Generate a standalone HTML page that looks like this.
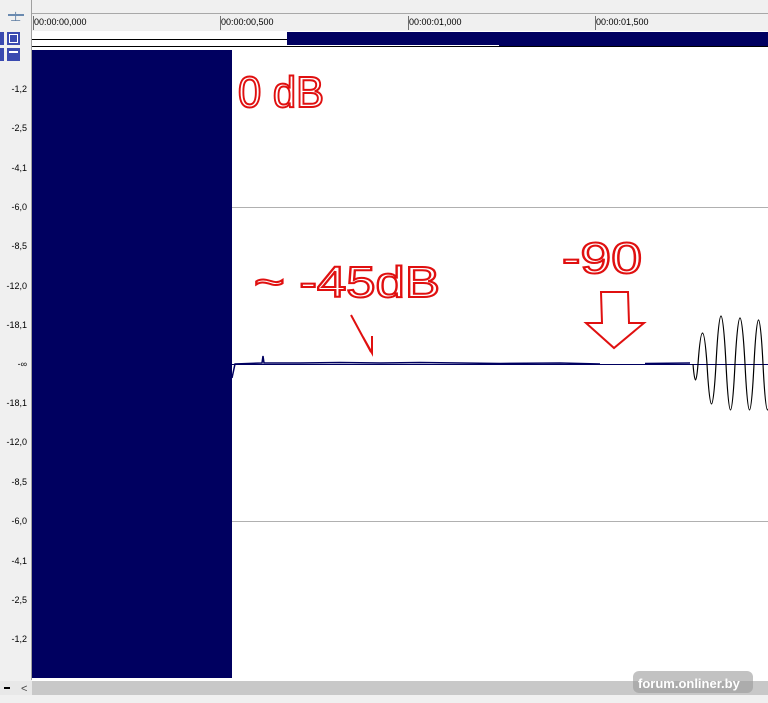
<!DOCTYPE html>
<html><head><meta charset="utf-8"><style>
body{margin:0;width:768px;height:703px;overflow:hidden;background:#f0f0f0;font-family:"Liberation Sans",sans-serif;}
</style></head><body>
<svg width="768" height="703" xmlns="http://www.w3.org/2000/svg" style="position:absolute;left:0;top:0">
<rect x="0" y="0" width="768" height="703" fill="#f0f0f0"/>
<line x1="31.5" y1="0" x2="31.5" y2="680" stroke="#a0a0a0"/>
<line x1="32" y1="13.5" x2="768" y2="13.5" stroke="#a8a8a8"/>
<g font-size="9" fill="#000">
<text x="34" y="25">00:00:00,000</text>
<text x="221" y="25">00:00:00,500</text>
<text x="409" y="25">00:00:01,000</text>
<text x="596" y="25">00:00:01,500</text>
</g>
<g stroke="#707070">
<line x1="33.5" y1="16" x2="33.5" y2="30"/><line x1="220.5" y1="16" x2="220.5" y2="30"/><line x1="408.5" y1="16" x2="408.5" y2="30"/><line x1="595.5" y1="16" x2="595.5" y2="30"/>
</g>
<text x="10" y="21" font-size="13" fill="#5a7aa0">⊥</text>
<line x1="8" y1="15" x2="24" y2="15" stroke="#6a8ab0" stroke-width="2"/>
<rect x="0" y="32" width="4" height="13" fill="#3a4ab0"/>
<rect x="7" y="32" width="13" height="13" fill="#3a4ab0"/><rect x="9.5" y="34.5" width="8" height="8" fill="none" stroke="#fff"/>
<rect x="0" y="48" width="4" height="13" fill="#3a4ab0"/>
<rect x="7" y="48" width="13" height="13" fill="#3a4ab0"/><line x1="9" y1="52" x2="18" y2="52" stroke="#fff" stroke-width="2"/>
<rect x="32" y="31" width="736" height="16" fill="#fff"/>
<line x1="32" y1="39.5" x2="768" y2="39.5" stroke="#000"/>
<line x1="32" y1="46.5" x2="768" y2="46.5" stroke="#000"/>
<rect x="287" y="32" width="213" height="13" fill="#000060"/>
<rect x="499" y="32" width="269" height="14" fill="#000060"/>
<rect x="32" y="47" width="736" height="634" fill="#fff"/>
<line x1="232" y1="207.5" x2="768" y2="207.5" stroke="#b0b0b0"/>
<line x1="232" y1="521.5" x2="768" y2="521.5" stroke="#b0b0b0"/>
<rect x="32" y="50" width="200" height="628" fill="#000060"/>
<line x1="232" y1="364.5" x2="768" y2="364.5" stroke="#000060"/>
<path d="M232 378 L235 364 L262 363 L263 356 L264 363 L300 363 L340 362.5 L380 363 L420 362.5 L460 363 L500 363.5 L560 363 L600 364 M645 363.5 L690 363" fill="none" stroke="#000060" stroke-width="1.5"/>
<path d="M693 364 Q695.5 396 698 364 Q702.5 302 707 364 Q711.5 444 716 364 Q721 268 726 364 Q730.5 456 735 364 Q740 272 745 364 Q749.5 456 754 364 Q758.5 276 763 364 Q767.5 456 772 364" fill="none" stroke="#000" stroke-width="1.2"/>
<g font-size="9" fill="#000" text-anchor="end">
<text x="27" y="92">-1,2</text><text x="27" y="131">-2,5</text><text x="27" y="171">-4,1</text><text x="27" y="210">-6,0</text><text x="27" y="249">-8,5</text><text x="27" y="289">-12,0</text><text x="27" y="328">-18,1</text><text x="27" y="367">-∞</text><text x="27" y="406">-18,1</text><text x="27" y="445">-12,0</text><text x="27" y="485">-8,5</text><text x="27" y="524">-6,0</text><text x="27" y="564">-4,1</text><text x="27" y="603">-2,5</text><text x="27" y="642">-1,2</text>
</g>
<g fill="none" stroke="#e01010" stroke-width="2">
<text x="238" y="107" font-size="44" fill="none" stroke="#e01010" stroke-width="2" textLength="86" lengthAdjust="spacingAndGlyphs">0 dB</text>
<text x="254" y="297" font-size="44" fill="none" stroke="#e01010" stroke-width="2" textLength="186" lengthAdjust="spacingAndGlyphs">~ -45dB</text>
<text x="562" y="273" font-size="44" fill="none" stroke="#e01010" stroke-width="2" textLength="80" lengthAdjust="spacingAndGlyphs">-90</text>
<path d="M351 315 L371 352 M363 337 L372 353 L372 336"/>
<path d="M601 292 L628 292 L629 323 L644 323 L614 348 L586 323 L602 323 Z"/>
</g>
<rect x="0" y="681" width="768" height="14" fill="#c8c8c8"/>
<rect x="0" y="681" width="32" height="14" fill="#e8e8e8"/>
<rect x="4" y="687" width="6" height="2" fill="#000"/>
<text x="21" y="692" font-size="11" fill="#444">&lt;</text>
<rect x="633" y="671" width="120" height="22" rx="6" fill="#999" opacity="0.6"/>
<text x="638" y="688" font-size="13" font-weight="bold" fill="#fff">forum.onliner.by</text>
<rect x="0" y="695" width="768" height="8" fill="#f0f0f0"/>
</svg>
</body></html>
